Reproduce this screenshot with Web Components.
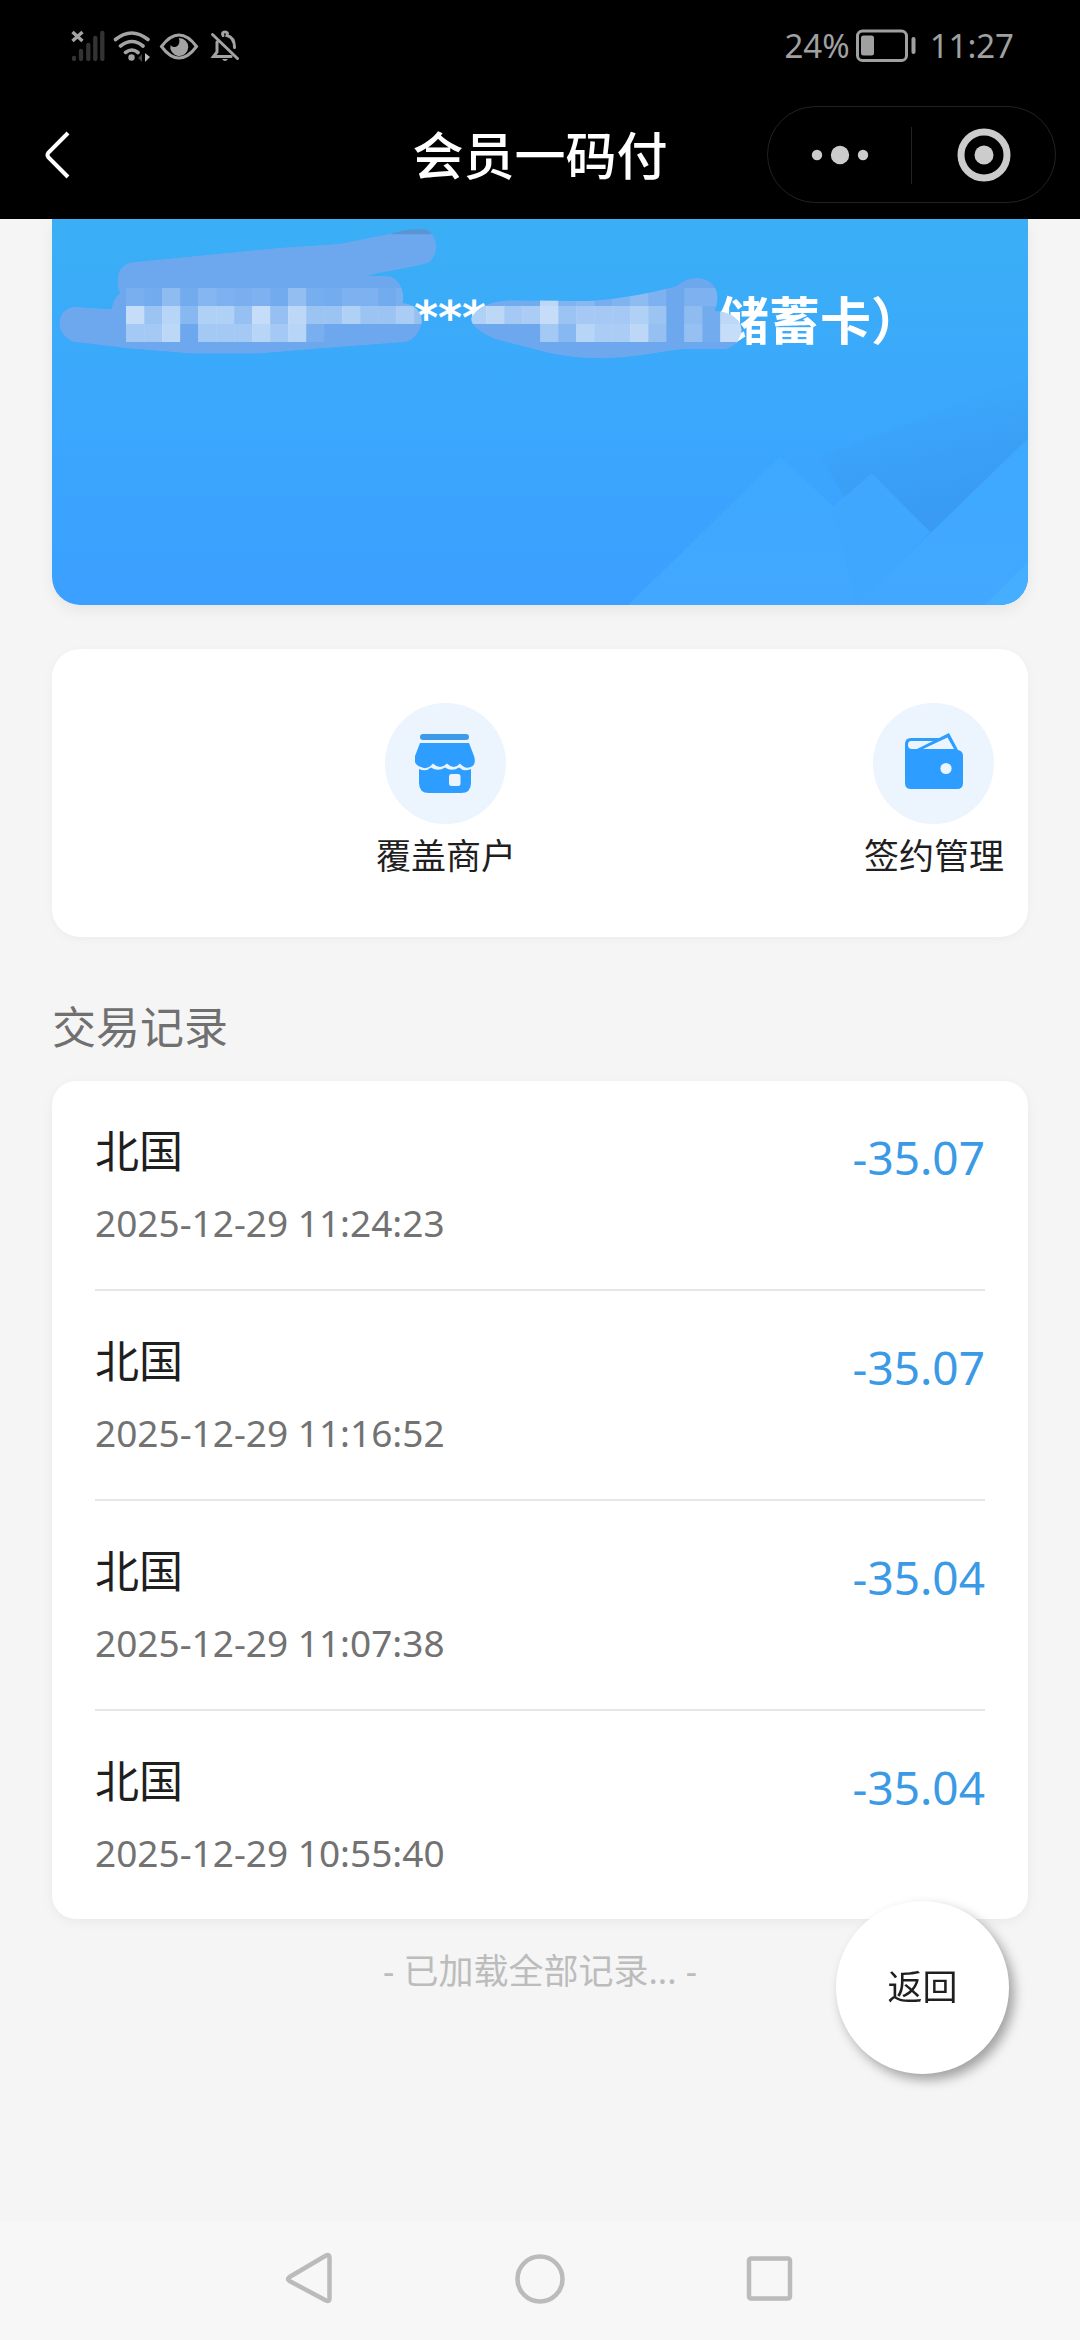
<!DOCTYPE html>
<html lang="zh-CN">
<head>
<meta charset="utf-8">
<meta name="viewport" content="width=device-width, initial-scale=1">
<title>会员一码付</title>
<style>
  html, body { margin: 0; }
  body {
    background: #f5f5f5;
    color: #1f1f1f;
    font-family: "Noto Sans", "Noto Sans CJK SC", sans-serif;
  }
</style>
</head>
<body>
<pay-app></pay-app>

<script>
const define = (name, html, setup) => {
  const template = document.createElement('template');
  template.innerHTML = html;
  customElements.define(name, class extends HTMLElement {
    constructor() {
      super();
      this.attachShadow({ mode: 'open' }).append(template.content.cloneNode(true));
      if (setup) setup(this.shadowRoot);
    }
  });
};

define('status-bar', `
<style>
  :host { display: flex; justify-content: space-between; align-items: center; height: 92px; padding: 0 66px 0 71px; background: #000; color: #a0a0a0; font-size: 33px; line-height: 48px; }
  svg { display: block; }
  div { display: flex; align-items: center; }
  .right { gap: 6px; }
  .time { padding-left: 8px; }
</style>
<div><svg width="170" height="36" viewBox="71 27 170 36" fill="none" stroke="#a3a3a3" stroke-linecap="round" aria-hidden="true">
  <path d="M72.500 31l10 9m0-9l-10 9" stroke-width="3.400" stroke-linecap="butt"/>
  <g stroke="#333" stroke-width="4.300"><path d="M74 57v1M81 50v8M88.300 44v14M95.300 37v21M102.300 32v26"/></g>
  <g stroke-width="3.600"><path d="M115.500 38.500q16-13 32.500 0M120.500 45q11.500-9 22.500 0M125.500 51.500q6.500-5 12.500 0"/></g>
  <circle cx="131.500" cy="56.500" r="3.200" fill="#a3a3a3" stroke="none"/>
  <path d="M142 53l-4 4 4 4z" fill="#444" stroke="none"/><path d="M145 52l5 4-5 5z" fill="#bbb" stroke="none"/>
  <path d="M161.500 45.500Q170 34 179 34t17.500 11.500Q188 57 179 57t-17.500-11.500z" stroke-width="3"/>
  <path d="M179 37a9 9 0 1 1-8.500 7q2 3 6 1.500 4-2 2.500-8.500z" fill="#a3a3a3" stroke="none"/>
  <path d="M212.500 33.500l25 24M217 41v10l-3.500 4.500H231M223 34.500q-1.500-3.500 2-3.500t2 3.500q7.500 2 7.500 12" stroke-width="3"/>
  <path d="M222 58h6q-3 4-6 0z" fill="#a3a3a3" stroke="none"/>
</svg></div>
<div class="right"><span>24%</span>
<svg width="60" height="34" viewBox="856 29 60 34" fill="none" aria-hidden="true"><rect x="857.500" y="31" width="49" height="29.500" rx="5" stroke="#a0a0a0" stroke-width="3"/><rect x="861" y="35.500" width="13" height="20" rx="2.500" fill="#a0a0a0"/><rect x="911.500" y="37" width="4" height="17" rx="2" fill="#a0a0a0"/></svg>
<span class="time">11:27</span></div>`);

define('title-bar', `
<style>
  :host { display: grid; box-sizing: border-box; grid-template-columns: 1fr auto 1fr; align-items: center; height: 127px; padding: 0 24px 2px; background: #000; color: #fff; }
  h1 { margin: 0; font-size: 51px; line-height: 72px; font-weight: 500; }
  button { appearance: none; border: 0; padding: 0; background: none; display: flex; align-items: center; justify-content: center; height: 96px; }
  .back { width: 44px; margin-left: 12px; }
  .capsule { justify-self: end; box-sizing: border-box; width: 289px; height: 97px; border: 1px solid #222; border-radius: 49px; display: grid; grid-template-columns: 1fr 1px 1fr; align-items: center; }
  i { height: 57px; background: #222; }
</style>
<button class="back" aria-label="返回上页"><svg width="26" height="48" viewBox="0 0 26 48" fill="none" stroke="#fff" stroke-width="4"><path d="M23 2L3.500 21.500q-2 2.500 0 5L23 46"/></svg></button>
<h1><slot></slot></h1>
<div class="capsule">
  <button aria-label="更多"><svg width="58" height="20" viewBox="0 0 58 20" fill="#ccc"><circle cx="6" cy="10" r="5.200"/><circle cx="29" cy="10" r="9.200"/><circle cx="52" cy="10" r="5.200"/></svg></button>
  <i></i>
  <button aria-label="关闭"><svg width="54" height="54" viewBox="0 0 54 54"><circle cx="27" cy="27" r="23" fill="none" stroke="#ccc" stroke-width="7"/><circle cx="27" cy="27" r="9.500" fill="#ccc"/></svg></button>
</div>`);

define('bank-card', `
<style>
  :host { display: block; position: relative; height: 386px; border-radius: 0 0 28px 28px; overflow: hidden; background: linear-gradient(#3aaff5, #3ba8fc 45%, #3b9fff); box-shadow: 0 6px 14px rgba(0,0,0,.06); color: #fff; }
  svg { position: absolute; inset: 0; width: 100%; height: 100%; }
  p { margin: 0; padding: 62px 0 0 74px; display: grid; grid-template-columns: 288px 304px auto; align-items: start; font: 700 51px/74px "Noto Sans CJK SC", sans-serif; }
  .stars { grid-column: 2; font: 700 46px/74px "DejaVu Sans", sans-serif; }
</style>
<svg viewBox="52 219 976 386" preserveAspectRatio="xMaxYMax slice" aria-hidden="true">
  <defs>
    <linearGradient id="shade" x1=".3" y1="0" x2=".6" y2="1"><stop offset=".15" stop-color="#3898ec" stop-opacity="0"/><stop offset="1" stop-color="#3897ef"/></linearGradient>
    <linearGradient id="hill" x1="0" y1="0" x2="0" y2="1"><stop offset="0" stop-color="#3da9fe"/><stop offset="1" stop-color="#42a8ff"/></linearGradient>
  </defs>
  <g transform="translate(560 370) scale(.3333)">
    <path d="M780 260L1404 20V400L1110 485 990 600z" fill="url(#shade)"/>
    <path d="M205 705L660 260 820 410 900 345 1010 600 1404 705z" fill="url(#hill)"/>
    <path d="M820 410L935 310 1110 485 1000 600 890 705z" fill="#3fa7fe"/>
    <path d="M890 705L1404 205V705z" fill="url(#hill)"/>
    <path d="M1275 705L1404 575V705z" fill="#46aeff"/>
  </g>
</svg>
<p><span class="stars">***</span><span>储蓄卡）</span></p>
<svg id="mask" viewBox="52 219 976 386" preserveAspectRatio="xMinYMin slice" aria-hidden="true">
  <defs>
    <clipPath id="c1"><path id="s1" d="M58 325C58 295 80 275 105 275L215 283C218 262 225 245 240 235C225 200 230 150 275 142L700 100 900 86 1060 54C1100 42 1140 40 1160 44C1195 60 1200 120 1165 143C1120 158 1050 165 985 182L1050 184C1085 195 1095 240 1088 265C1120 265 1150 290 1145 325C1140 350 1125 378 1090 382L850 400 650 416H460L260 400 100 380C75 370 58 350 58 325z"/></clipPath>
    <clipPath id="c2"><path id="s2" d="M80 310C95 275 130 258 180 256L380 258C470 250 540 235 610 212C640 180 690 180 708 220C718 245 712 270 706 288C740 288 778 310 775 350C770 380 750 400 735 402H630C560 410 500 430 400 430C330 428 280 415 240 402L150 375C110 360 80 335 80 310z"/></clipPath>
  </defs>
  <g transform="translate(40 215) scale(.3333)"><g clip-path="url(#c1)"><use href="#s1" fill="#6da8ee"/><path d="M1050 58L1100 40H1180V58z" fill="#5796d2"/><g class="tiles" data-x="258" data-w="54" data-rows="10 5 25 5 18 12 10 12 5 28 8 6 12 12 5 10 0|65 35 55 20 50 50 30 65 30 60 35 35 50 35 35 45 30|40 40 60 0 40 40 40 55 40 55 10"></g></g></g>
  <g transform="translate(440 215) scale(.389 .3333)"><g clip-path="url(#c2)"><use href="#s2" fill="#6da8ee"/><g class="tiles" data-x="72" data-w="46.300" data-rows="5 5 5 5 60 15 20 8 15 25 12 0 12 12|50 60 40 45 65 35 42 42 42 50 35 0 25 5 60 60|0 0 0 0 40 20 55 45 45 60 30 0 30 5 65 65"></g></g></g>
</svg>`, root => {
  // Each number is the lightness of one mosaic tile, in percent of white.
  for (const group of root.querySelectorAll('.tiles')) {
    const x = +group.dataset.x, w = +group.dataset.w;
    group.dataset.rows.split('|').forEach((row, r) => row.split(' ').forEach((v, c) => {
      const tile = document.createElementNS('http://www.w3.org/2000/svg', 'rect');
      tile.setAttribute('x', x + c * w);
      tile.setAttribute('y', 219 + r * 54);
      tile.setAttribute('width', w + .6);
      tile.setAttribute('height', 54);
      tile.setAttribute('fill', '#f4f9fd');
      tile.setAttribute('fill-opacity', v / 100);
      group.append(tile);
    }));
  }
});

define('service-item', `
<style>
  :host { display: flex; justify-content: flex-end; padding-right: 24px; }
  button { appearance: none; border: 0; padding: 0; background: none; color: inherit; font: inherit; font-size: 35px; line-height: 52px; display: flex; flex-direction: column; align-items: center; gap: 6px; }
  .disc { width: 121px; height: 121px; border-radius: 50%; background: #ecf4fd; display: flex; align-items: center; justify-content: center; }
</style>
<button><span class="disc"><slot name="icon"></slot></span><span><slot></slot></span></button>`);

define('service-panel', `
<style>
  :host { display: grid; grid-template-columns: 1fr 1fr; padding: 54px 0 55px; border-radius: 28px; background: #fff; box-shadow: 0 2px 10px rgba(0,0,0,.04); }
  svg { display: block; }
</style>
<service-item><svg slot="icon" width="62" height="62" viewBox="1 0 62 62" fill="#2d9eff" aria-hidden="true">
  <rect x="6" y="1" width="49" height="6" rx="3" fill="#3d9ae8"/>
  <path d="M6 10h49l5 13q3 10-5 11.500-5 1-9-4-6 7-13 0-7 7-14 0-6 7-12 3.500Q-1 32 1 23z"/>
  <path d="M5 36q7 3 12-1.500 7 4.500 14 0 7 4.500 14 0 5 4.500 12 1.500V50q0 10-10 10H15Q5 60 5 50z"/>
  <rect x="35" y="41" width="11.500" height="12" rx="2.500" fill="#ecf4fd"/>
</svg>覆盖商户</service-item>
<service-item><svg slot="icon" width="62" height="62" viewBox="0 0 62 62" fill="#2d9eff" aria-hidden="true">
  <path d="M2 11q0-6 6-6h28L46 0l9 17q5 1 5 6v27q0 6-6 6H8q-6 0-6-6z"/>
  <path d="M8 8h22L14 16H9q-4 0-4-4t3-4zM20 16L44.500 4.500 51 16z" fill="#ecf4fd"/>
  <circle cx="43" cy="35.500" r="5.600" fill="#ecf4fd"/>
</svg>签约管理</service-item>`);

define('record-row', `
<style>
  :host { display: flex; justify-content: space-between; align-items: flex-start; padding: 38px 0 40px; }
  :host(:not(:last-child)) { border-bottom: 2px solid #e6e6e6; }
  .info { display: flex; flex-direction: column; gap: 14px; }
  .name { font-size: 44px; line-height: 64px; color: #1f1f1f; }
  .date { font-size: 37px; line-height: 52px; color: #727272; }
  .sum { font-size: 46px; line-height: 64px; padding-top: 6px; color: #3b9ae6; }
</style>
<div class="info"><span class="name"><slot></slot></span><span class="date"><slot name="date"></slot></span></div>
<span class="sum"><slot name="sum"></slot></span>`);

define('record-list', `
<style>
  :host { display: block; padding: 0 43px; border-radius: 24px; background: #fff; box-shadow: 0 3px 12px rgba(0,0,0,.05); }
</style>
<record-row>北国<span slot="date">2025-12-29 11:24:23</span><span slot="sum">-35.07</span></record-row>
<record-row>北国<span slot="date">2025-12-29 11:16:52</span><span slot="sum">-35.07</span></record-row>
<record-row>北国<span slot="date">2025-12-29 11:07:38</span><span slot="sum">-35.04</span></record-row>
<record-row>北国<span slot="date">2025-12-29 10:55:40</span><span slot="sum">-35.04</span></record-row>`);

define('float-button', `
<style>
  :host { position: fixed; right: 71px; bottom: 266px; }
  button { appearance: none; border: 0; padding: 0 0 2px; width: 173px; height: 173px; border-radius: 50%; background: #fff; box-shadow: 5px 6px 12px rgba(0,0,0,.35); color: #1f1f1f; font: inherit; font-size: 35px; line-height: 52px; }
</style>
<button><slot></slot></button>`);

define('system-nav', `
<style>
  :host { display: flex; box-sizing: border-box; justify-content: center; align-items: center; gap: 180px; height: 118px; padding-bottom: 4px; background: #f7f7f7; }
  button { appearance: none; border: 0; padding: 0; background: none; display: flex; }
  svg { fill: none; stroke: #bbb; stroke-width: 4.500; stroke-linejoin: round; }
</style>
<button aria-label="后退"><svg width="50" height="54" viewBox="0 0 50 54"><path d="M4.500 25L41 3.500q3.500-1.500 3.500 2v41q0 3.500-3.500 2L4.500 29q-3-2 0-4z"/></svg></button>
<button aria-label="主页"><svg width="50" height="50" viewBox="0 0 50 50"><circle cx="25" cy="25" r="22.500"/></svg></button>
<button aria-label="最近任务"><svg width="50" height="50" viewBox="0 0 50 50"><rect x="4" y="4.500" width="41" height="40" rx="2"/></svg></button>`);

define('pay-app', `
<style>
  :host { display: flex; flex-direction: column; min-height: 100vh; }
  main { flex: 1; padding: 0 52px; }
  service-panel { margin-top: 44px; }
  h2 { margin: 58px 0 22px; font-size: 44px; line-height: 64px; font-weight: 400; color: #707070; }
  .end { margin: 26px 0 0; text-align: center; font-size: 35px; line-height: 52px; color: #bcbcbc; }
</style>
<header><status-bar></status-bar><title-bar>会员一码付</title-bar></header>
<main>
  <bank-card></bank-card>
  <service-panel></service-panel>
  <h2>交易记录</h2>
  <record-list></record-list>
  <p class="end">- 已加载全部记录... -</p>
</main>
<float-button>返回</float-button>
<system-nav></system-nav>`);
</script>
</body>
</html>
